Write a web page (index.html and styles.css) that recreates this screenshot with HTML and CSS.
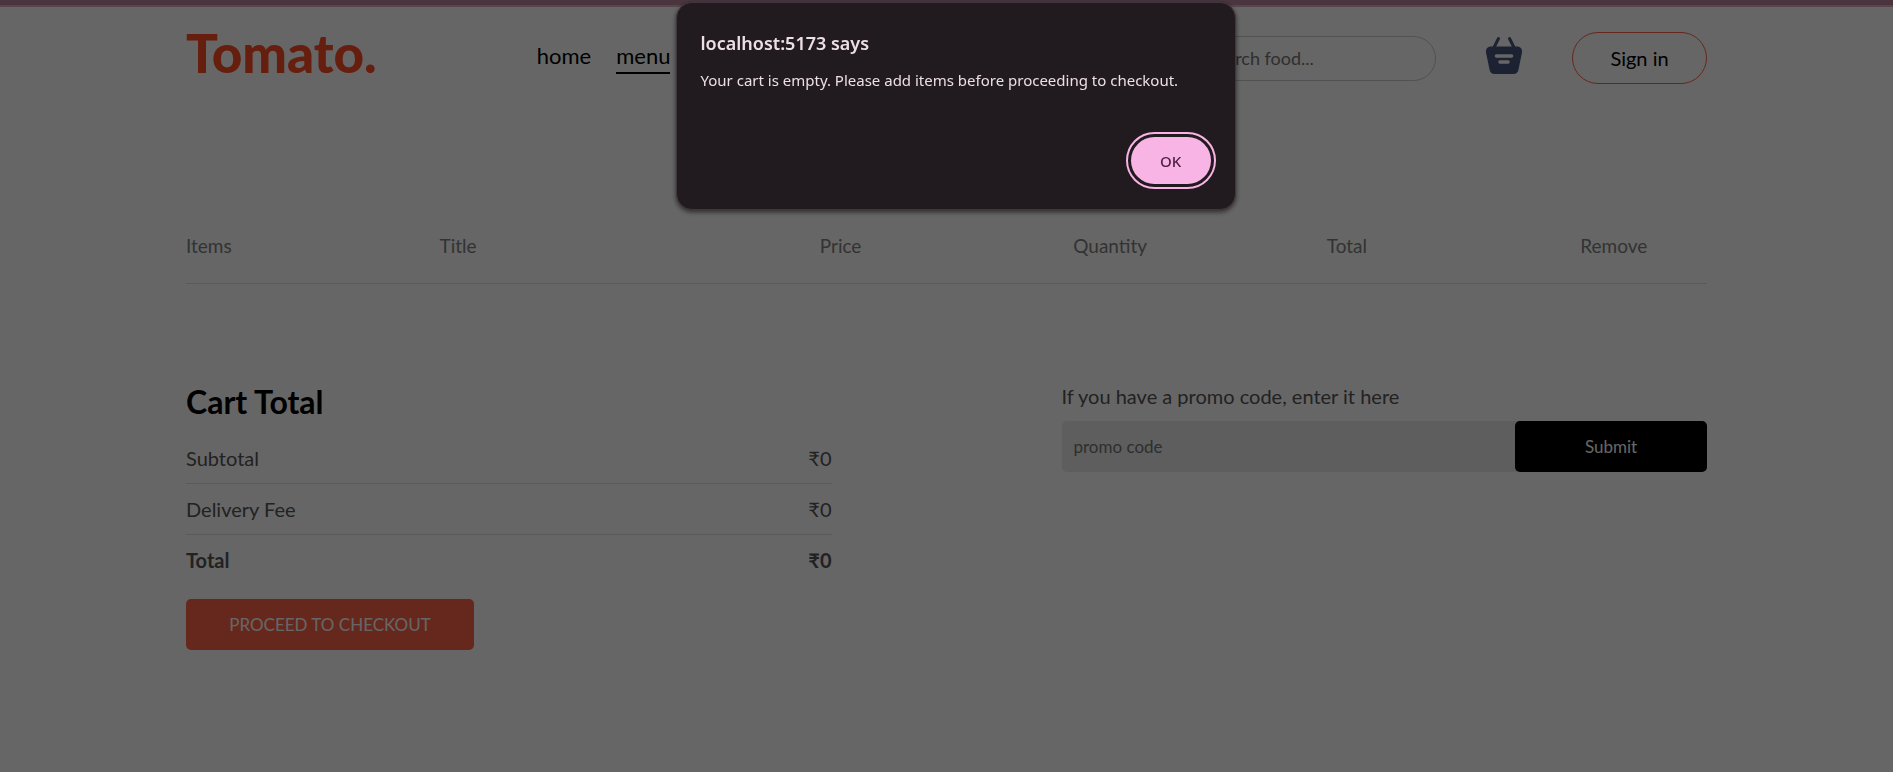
FILE: index.html
```html
<!DOCTYPE html>
<html lang="en">
<head>
<meta charset="utf-8">
<meta name="viewport" content="width=device-width, initial-scale=1">
<title>Tomato.</title>
<link rel="stylesheet" href="styles.css">
</head>
<body>
<div class="page">
  <header class="navbar">
    <a class="logo" href="#">Tomato.</a>
    <nav class="menu">
      <a class="menu-link" href="#">home</a>
      <a class="menu-link active" href="#">menu</a>
    </nav>
    <div class="nav-right">
      <input class="search" type="search" placeholder="Search food..." aria-label="Search food">
      <a class="basket" href="#" aria-label="Cart">
        <svg width="36" height="37" viewBox="0 0 36 37" fill="none">
          <path d="M12.500 1.500 8 10.500M23.500 1.500 28 10.500" stroke="#49557e" stroke-width="3" stroke-linecap="round"/>
          <path d="M5 9.500H31C34.500 9.500 36.500 12 36 15.500L32.500 32.500C32 35.500 30 37 27.500 37H8.500C6 37 4 35.500 3.500 32.500L0 15.500C-.5 12 1.500 9.500 5 9.500Z" fill="#49557e"/>
          <path d="M10.500 19H25.500M14 25H22" stroke="#fff" stroke-width="3.600" stroke-linecap="round"/>
        </svg>
      </a>
      <button class="sign-in" type="button">Sign in</button>
    </div>
  </header>

  <main class="cart">
    <table class="items">
      <thead>
        <tr class="items-head">
          <th>Items</th><th>Title</th><th>Price</th><th>Quantity</th><th>Total</th><th>Remove</th>
        </tr>
      </thead>
    </table>

    <div class="cart-bottom">
      <section class="totals">
        <h2 class="totals-title">Cart Total</h2>
        <div class="row"><span>Subtotal</span><span>₹0</span></div>
        <div class="row"><span>Delivery Fee</span><span>₹0</span></div>
        <div class="row grand"><b>Total</b><b>₹0</b></div>
        <button class="checkout" type="button">PROCEED TO CHECKOUT</button>
      </section>
      <section class="promo">
        <label class="promo-label" for="promo">If you have a promo code, enter it here</label>
        <div class="promo-field">
          <input class="promo-input" id="promo" type="text" placeholder="promo code">
          <button class="promo-submit" type="button">Submit</button>
        </div>
      </section>
    </div>
  </main>
</div>

<div class="overlay">
  <dialog class="alert" open aria-labelledby="alert-title">
    <h1 class="alert-title" id="alert-title">localhost:5173 says</h1>
    <p class="alert-text">Your cart is empty. Please add items before proceeding to checkout.</p>
    <button class="alert-ok" type="button">OK</button>
  </dialog>
</div>
</body>
</html>
```
FILE: styles.css
```css
* {
  box-sizing: border-box;
  margin: 0;
}

body {
  min-height: 100vh;
  background: #fff;
  font-family: Lato, "Open Sans", sans-serif;
  color: #000;
}

a {
  color: inherit;
  text-decoration: none;
}

button,
input {
  font-family: inherit;
}

.page {
  padding: 0 186px;
  border-top: 5px solid #b9849f;
  box-shadow: inset 0 2px #d9b0bb;
}

/* Top bar */
.navbar {
  display: flex;
  align-items: center;
  padding: 20px 0;
  height: 106px;
}

.logo {
  padding-bottom: 10px;
  color: #ff4c24;
  font-size: 53px;
  font-weight: 900;
  line-height: 60px;
}

.menu {
  display: flex;
  gap: 25px;
  margin-left: 160px;
  font-size: 22px;
}

.menu-link {
  padding-bottom: 2px;
  border-bottom: 2px solid transparent;
  line-height: 28px;
}

.menu-link.active {
  border-color: #000;
}

.nav-right {
  display: flex;
  align-items: center;
  gap: 50px;
  margin-left: auto;
}

.search {
  width: 250px;
  height: 45px;
  padding: 0 20px;
  border: 1px solid #ccc;
  border-radius: 50px;
  background: transparent;
  font-size: 18px;
}

.search::placeholder,
.promo-input::placeholder {
  color: #757575;
}

.basket {
  padding-bottom: 6px;
}

.basket svg {
  display: block;
  overflow: visible;
}

.sign-in {
  width: 135px;
  height: 52px;
  border: 1px solid tomato;
  border-radius: 50px;
  background: transparent;
  font-size: 20px;
}

/* Item list header */
.items {
  display: block;
  margin-top: 122px;
}

.items thead {
  display: block;
}

.items-head {
  display: grid;
  grid-template-columns: 1fr 1.5fr 1fr 1fr 1fr .5fr;
  padding-bottom: 24px;
  border-bottom: 1px solid #e2e2e2;
  color: #808080;
  font-size: 19px;
  line-height: 26px;
}

.items-head th {
  min-width: 0;
  padding: 0;
  font-weight: 400;
  text-align: left;
}

/* Totals and promo code */
.cart-bottom {
  display: grid;
  grid-template-columns: 1fr 1fr;
  gap: 230px;
  margin-top: 99px;
}

.totals-title {
  margin-bottom: 12px;
  font-size: 32px;
  line-height: 38px;
}

.row {
  display: flex;
  justify-content: space-between;
  padding: 12px 0;
  border-bottom: 1px solid #e2e2e2;
  color: #555;
  font-size: 20px;
  line-height: 26px;
}

.row.grand {
  border-bottom: 0;
}

.checkout {
  width: 288px;
  height: 51px;
  margin-top: 14px;
  border: 0;
  border-radius: 5px;
  background: tomato;
  color: #fff;
  font-size: 17px;
}

.promo-label {
  display: block;
  color: #555;
  font-size: 20px;
  line-height: 26px;
}

.promo-field {
  display: flex;
  margin-top: 12px;
  border-radius: 5px;
  background: #eaeaea;
}

.promo-input {
  flex: 1;
  min-width: 0;
  padding: 0 12px;
  border: 0;
  background: transparent;
  font-size: 17px;
}

.promo-submit {
  width: 192px;
  height: 51px;
  border: 0;
  border-radius: 5px;
  background: #000;
  color: #fff;
  font-size: 17px;
}

/* Modal alert over the dimmed page */
.overlay {
  position: fixed;
  inset: 0;
  display: flex;
  justify-content: center;
  align-items: flex-start;
  padding: 2px 0 0 18px;
  background: rgba(0, 0, 0, .6);
}

.alert {
  position: static;
  display: flex;
  flex-direction: column;
  width: 560px;
  margin: 0;
  padding: 25px 24px;
  border: 1px solid #43353d;
  border-radius: 16px;
  background: #211a1e;
  box-shadow: 0 2px 5px rgba(0, 0, 0, .6);
  color: #ecdfe5;
  font-family: "Noto Sans", "Open Sans", sans-serif;
}

.alert-title {
  font-size: 18px;
  font-weight: 600;
  line-height: 30px;
}

.alert-text {
  margin-top: 10px;
  font-size: 15px;
  line-height: 24px;
}

.alert-ok {
  align-self: flex-end;
  width: 80px;
  height: 47px;
  margin-top: 45px;
  border: 0;
  border-radius: 24px;
  outline: 2px solid #f8b4e4;
  outline-offset: 3px;
  background: #f8b4e4;
  color: #4f2145;
  font-size: 15px;
  font-weight: 500;
}
```
